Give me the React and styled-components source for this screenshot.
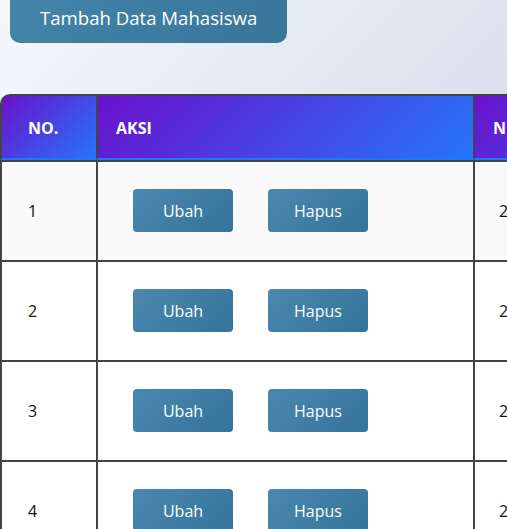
import React from 'react'
import styled, { createGlobalStyle } from 'styled-components'

const GlobalStyle = createGlobalStyle`
  body {
    margin: 0;
    overflow: hidden;
    min-height: 100vh;
    background: linear-gradient(135deg, #f5f7fa, #c3cfe2);
    font-family: "Open Sans", "Noto Sans", sans-serif;
  }
`

const Page = styled.div`
  display: flex;
  flex-direction: column;
  align-items: flex-start;
  gap: 51px;
  min-height: 100vh;
`

const AddButton = styled.button`
  margin-left: 10px;
  height: 43px;
  padding: 0 30px 8px;
  border: none;
  border-radius: 0 0 10px 10px;
  background: linear-gradient(135deg, #4584ab, #377699);
  color: #fff;
  font-family: inherit;
  font-size: 18.6px;
  cursor: pointer;
`

const Table = styled.table`
  border-collapse: separate;
  border-spacing: 0;
  table-layout: fixed;
  width: 760px;
`

const Th = styled.th`
  box-sizing: border-box;
  width: ${({ $w }) => $w}px;
  height: 66px;
  padding: 2px 0 0 ${({ $pl }) => $pl}px;
  text-align: left;
  color: #fff;
  font-size: 16px;
  font-weight: 700;
  background: linear-gradient(135deg, #6a11cb, #2575fc);
  border-top: 2px solid #444;
  border-right: 2px solid #444;
  border-left: ${({ $first }) => ($first ? '2px solid #444' : 'none')};
  border-bottom: 2px solid #2575fc;
  border-top-left-radius: ${({ $first }) => ($first ? '10px' : '0')};
`

const Row = styled.tr`
  background: ${({ $shade }) => ($shade ? '#f9f9f9' : '#fff')};
`

const Td = styled.td`
  box-sizing: border-box;
  height: 100px;
  padding: 0 0 1px ${({ $pl }) => $pl}px;
  color: #111;
  font-size: 16px;
  vertical-align: middle;
  border-top: 2px solid #444;
  border-right: 2px solid #444;
  border-left: ${({ $first }) => ($first ? '2px solid #444' : 'none')};
  white-space: nowrap;
`

const Actions = styled.div`
  display: flex;
  gap: 35px;
`

const ActionButton = styled.button`
  width: 100px;
  height: 43px;
  border: none;
  border-radius: 4px;
  background: linear-gradient(135deg, #4b88af, #34739a);
  color: #fff;
  font-family: inherit;
  font-size: 16px;
  cursor: pointer;
`

const rows = [
  { no: 1, nim: '2021001' },
  { no: 2, nim: '2021002' },
  { no: 3, nim: '2021003' },
  { no: 4, nim: '2021004' },
]

export default function App() {
  return (
    <>
      <GlobalStyle />
      <Page>
        <AddButton>Tambah Data Mahasiswa</AddButton>
        <Table>
          <thead>
            <tr>
              <Th $first $w={98} $pl={26}>NO.</Th>
              <Th $w={377} $pl={18}>AKSI</Th>
              <Th $w={285} $pl={18}>NIM</Th>
            </tr>
          </thead>
          <tbody>
            {rows.map((r, i) => (
              <Row key={r.no} $shade={i === 0}>
                <Td $first $pl={26}>{r.no}</Td>
                <Td $pl={35}>
                  <Actions>
                    <ActionButton>Ubah</ActionButton>
                    <ActionButton>Hapus</ActionButton>
                  </Actions>
                </Td>
                <Td $pl={24}>{r.nim}</Td>
              </Row>
            ))}
          </tbody>
        </Table>
      </Page>
    </>
  )
}
